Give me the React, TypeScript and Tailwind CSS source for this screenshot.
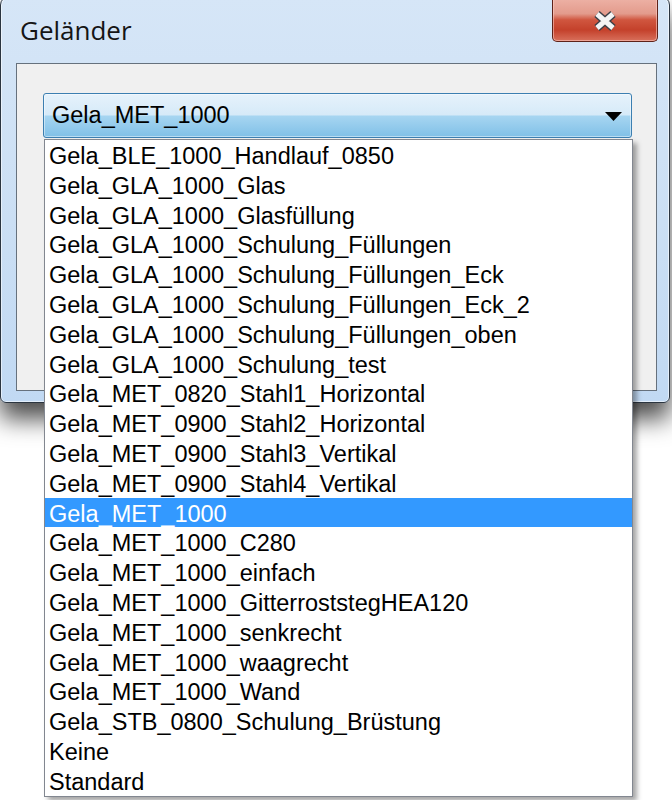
const items = [
  "Gela_BLE_1000_Handlauf_0850",
  "Gela_GLA_1000_Glas",
  "Gela_GLA_1000_Glasfüllung",
  "Gela_GLA_1000_Schulung_Füllungen",
  "Gela_GLA_1000_Schulung_Füllungen_Eck",
  "Gela_GLA_1000_Schulung_Füllungen_Eck_2",
  "Gela_GLA_1000_Schulung_Füllungen_oben",
  "Gela_GLA_1000_Schulung_test",
  "Gela_MET_0820_Stahl1_Horizontal",
  "Gela_MET_0900_Stahl2_Horizontal",
  "Gela_MET_0900_Stahl3_Vertikal",
  "Gela_MET_0900_Stahl4_Vertikal",
  "Gela_MET_1000",
  "Gela_MET_1000_C280",
  "Gela_MET_1000_einfach",
  "Gela_MET_1000_GitterroststegHEA120",
  "Gela_MET_1000_senkrecht",
  "Gela_MET_1000_waagrecht",
  "Gela_MET_1000_Wand",
  "Gela_STB_0800_Schulung_Brüstung",
  "Keine",
  "Standard",
];

const selected = "Gela_MET_1000";

function CloseGlyph() {
  return (
    <svg width="26" height="22" viewBox="0 0 26 22">
      <path d="M5 4 L21 18 M21 4 L5 18" stroke="#3b3f46" strokeWidth="8" strokeLinecap="butt" fill="none" />
      <path d="M5 4 L21 18 M21 4 L5 18" stroke="#f4f4f4" strokeWidth="5" strokeLinecap="butt" fill="none" />
    </svg>
  );
}

export default function App() {
  return (
    <div className="relative h-[800px] w-[672px] overflow-hidden bg-white font-['Liberation_Sans',Arial,sans-serif]">
      {/* window */}
      <div className="relative -mt-[4px] flex h-[407px] w-[670px] flex-col rounded-t-[9px] rounded-b-[6px] border border-[#2b3540] bg-[linear-gradient(to_bottom,#d6e6f7_0%,#cbdff4_55%,#c1d9f3_100%)] pl-[15px] pr-[12px] pb-[11px] shadow-[inset_0_0_0_1px_rgba(255,255,255,0.55),0_16px_24px_rgba(0,0,0,0.7)]">
        {/* title bar */}
        <div className="relative h-[66px] shrink-0 pt-[16px] pl-[4px]">
          <span className="font-['Open_Sans',sans-serif] text-[26px] leading-[34px] text-[#151515]">Geländer</span>
          <div className="absolute right-[-1px] top-0 flex h-[45px] w-[106px] items-center justify-center rounded-b-[5px] border border-t-0 border-[#5e2219] bg-[linear-gradient(to_bottom,#eeb4a8_0%,#e39b8c_38%,#d0563f_52%,#c4412b_75%,#d8705c_100%)] pt-[3px] shadow-[inset_0_0_0_1px_rgba(255,210,200,0.55)]">
            <CloseGlyph />
          </div>
        </div>

        {/* client area */}
        <div className="flex-1 border border-[#66717d] bg-[#f0f0f0] pl-[26px] pr-[24px] pt-[29px]">
          <div className="flex h-[45px] items-center justify-between rounded-[3px] border border-[#3c7fb1] bg-[linear-gradient(to_bottom,#e6f2fb_0%,#d6eaf8_48%,#a6d5f1_52%,#80c0e7_100%)] pl-[8px] pr-[9px] shadow-[inset_0_0_0_1px_rgba(255,255,255,0.45)]">
            <span className="text-[23.5px] leading-[43px] text-black">{selected}</span>
            <svg width="17" height="9" viewBox="0 0 17 9" className="mt-[2px]">
              <polygon points="0,0 17,0 8.5,9" fill="#000" />
            </svg>
          </div>
        </div>
      </div>

      {/* open dropdown list */}
      <div className="absolute left-[44px] top-[139px] w-[589px] border border-[#828790] bg-white shadow-[4px_4px_5px_rgba(0,0,0,0.35)]">
        {items.map((item) => (
          <div
            key={item}
            className={
              item === selected
                ? "h-[29.8px] whitespace-nowrap bg-[#3399ff] pl-[4px] text-[23.5px] leading-[33px] text-white"
                : "h-[29.8px] whitespace-nowrap pl-[4px] text-[23.5px] leading-[33px] text-black"
            }
          >
            {item}
          </div>
        ))}
      </div>
    </div>
  );
}
